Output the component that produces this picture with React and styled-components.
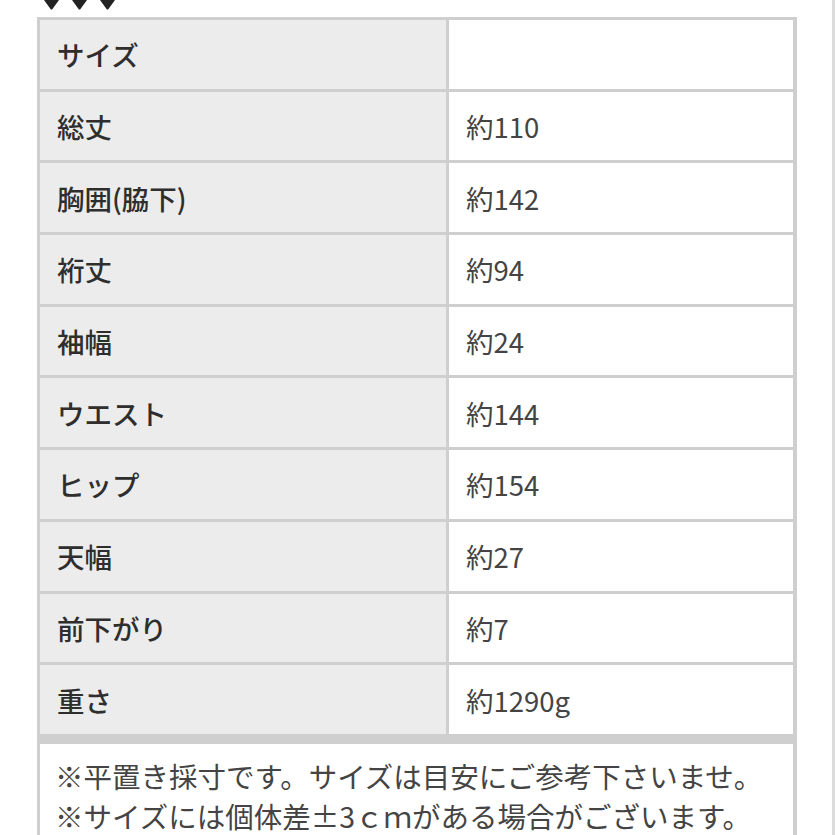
import React from "react";
import styled, { createGlobalStyle } from "styled-components";

const GlobalStyle = createGlobalStyle`
  html, body {
    margin: 0;
    padding: 0;
    background: #fff;
  }
  body {
    font-family: "Noto Sans CJK JP", "Noto Sans", sans-serif;
    color: #333;
  }
`;

const rows = [
  ["サイズ", ""],
  ["総丈", "約110"],
  ["胸囲(脇下)", "約142"],
  ["裄丈", "約94"],
  ["袖幅", "約24"],
  ["ウエスト", "約144"],
  ["ヒップ", "約154"],
  ["天幅", "約27"],
  ["前下がり", "約7"],
  ["重さ", "約1290g"],
];

const Page = styled.div`
  width: 832px;
  height: 835px;
  overflow: hidden;
  border-right: 3px solid #dcdcdc;
`;

const Marks = styled.div`
  display: flex;
  gap: 13px;
  height: 17px;
  padding-left: 44px;
`;

const Sheet = styled.div`
  margin-left: 37px;
  width: 760px;
`;

const Grid = styled.div`
  display: grid;
  grid-template-columns: 406px 344px;
  gap: 3px;
  padding: 3px 4px 0 3px;
  background: #cfcfcf;
`;

const Cell = styled.div`
  height: 68.7px;
  display: flex;
  align-items: center;
  padding-left: 17px;
  font-size: 27.5px;
  background: ${(p) => (p.$head ? "#ececec" : "#fff")};
  font-weight: ${(p) => (p.$head ? 500 : 400)};
  color: ${(p) => (p.$head ? "#2e2e2e" : "#444")};
`;

const Notes = styled.div`
  border-top: 10px solid #cfcfcf;
  border-left: 3px solid #cfcfcf;
  border-right: 4px solid #cfcfcf;
  background: #fff;
  padding: 12px 0 0 15px;
  font-size: 28.5px;
  line-height: 40px;
  color: #444;
  white-space: nowrap;
`;

function Mark() {
  return (
    <svg width="15" height="10" viewBox="0 0 15 10">
      <path d="M0 0 L15 0 L8.3 9.2 Q7.5 10 6.7 9.2 Z" fill="#222" />
    </svg>
  );
}

export default function App() {
  return (
    <Page>
      <GlobalStyle />
      <Marks>
        <Mark />
        <Mark />
        <Mark />
      </Marks>
      <Sheet>
        <Grid>
          {rows.map(([label, value]) => (
            <React.Fragment key={label}>
              <Cell $head>{label}</Cell>
              <Cell>{value}</Cell>
            </React.Fragment>
          ))}
        </Grid>
        <Notes>
          <div>※平置き採寸です。サイズは目安にご参考下さいませ。</div>
          <div>※サイズには個体差±3ｃｍがある場合がございます。</div>
        </Notes>
      </Sheet>
    </Page>
  );
}
